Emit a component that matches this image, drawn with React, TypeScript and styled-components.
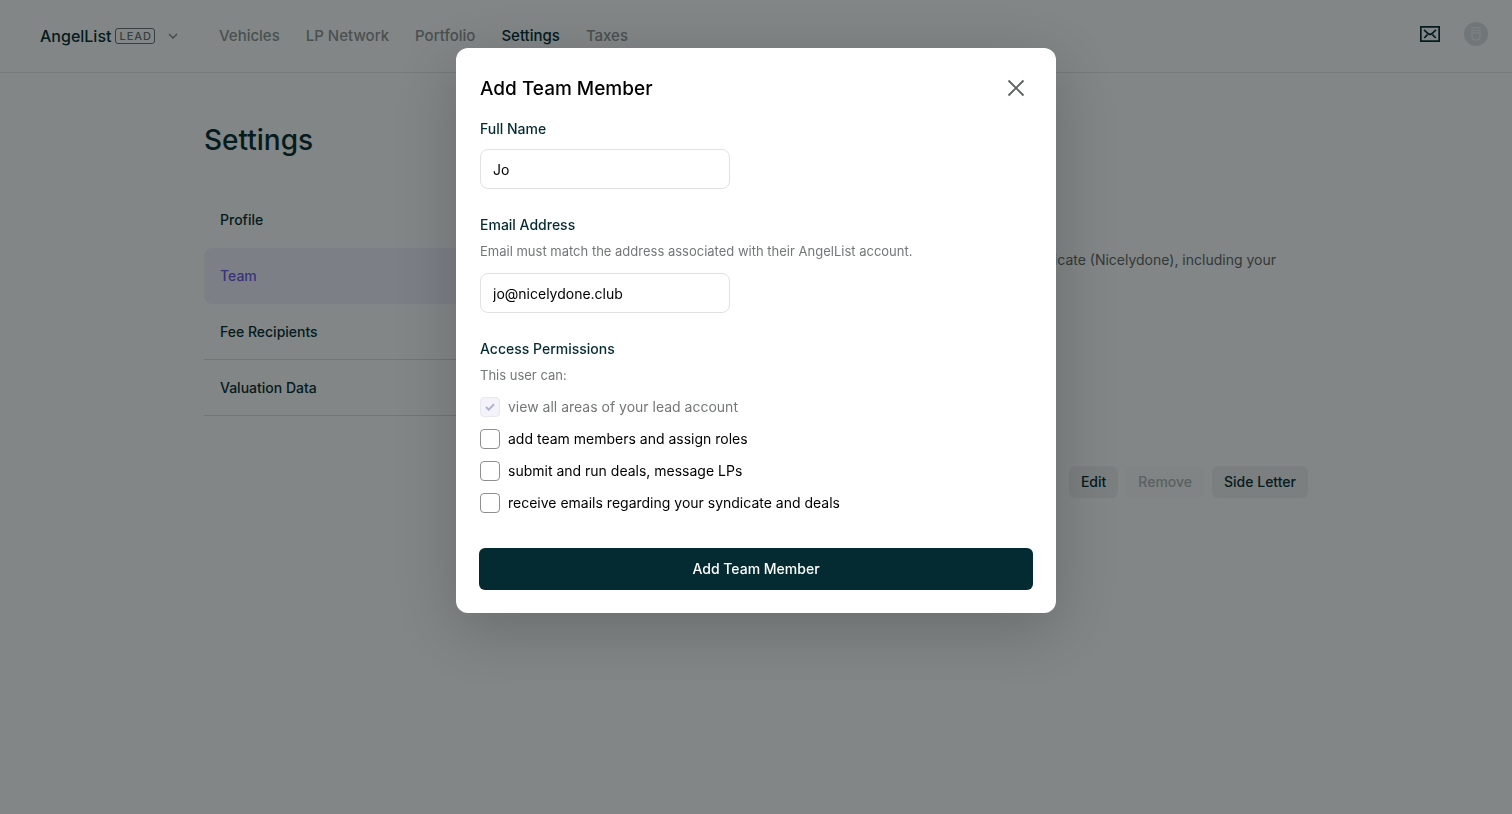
import React, { useState } from "react";
import styled, { createGlobalStyle } from "styled-components";

const ink = "#042b31";
const muted = "#737778";

const GlobalStyle = createGlobalStyle`
  *, *::before, *::after { box-sizing: border-box; }
  body { margin: 0; background: #fff; color: ${ink}; font-family: Inter, "Liberation Sans", sans-serif; font-size: 14px; line-height: 24px; }
  h1, h2, p, fieldset { margin: 0; padding: 0; border: 0; }
  button, input { font: inherit; color: inherit; }
  button { cursor: pointer; }
`;

const Page = styled.div`
  min-height: 100vh;
`;

const TopBar = styled.header`
  display: flex;
  align-items: center;
  height: 73px;
  padding: 0 24px 0 40px;
  border-bottom: 1px solid #e4e7e7;
`;

const Brand = styled.button`
  display: flex;
  align-items: center;
  width: 139px;
  padding: 0;
  border: 0;
  background: none;
  font-size: 16px;
  font-weight: 500;
`;

const LeadTag = styled.span`
  margin-left: 4px;
  padding: 0 2px 0 3px;
  border: 1px solid #6a7172;
  border-radius: 3px;
  color: #6a7172;
  font-size: 11px;
  line-height: 14px;
  letter-spacing: 1px;
`;

const Chevron = styled.svg`
  margin-left: auto;
`;

const Nav = styled.nav`
  display: flex;
  flex: 1;
  gap: 26px;
  margin-left: 40px;
`;

const NavLink = styled.a<{ $active?: boolean }>`
  color: ${(p) => (p.$active ? ink : "#8f9393")};
  font-size: 15px;
  font-weight: 500;
  text-decoration: none;
`;

const Tools = styled.div`
  display: flex;
  align-items: center;
  gap: 24px;
  padding-bottom: 4px;
`;

const IconButton = styled.button`
  display: flex;
  padding: 0;
  border: 0;
  background: none;
`;

const Content = styled.main`
  max-width: 1104px;
  margin: 0 auto;
  padding-top: 48px;
`;

const PageTitle = styled.h1`
  font-size: 28px;
  line-height: 38px;
  font-weight: 500;
`;

const Columns = styled.div`
  display: flex;
  gap: 32px;
  margin-top: 33px;
`;

const SideNav = styled.nav`
  flex: 0 0 268px;
`;

const SideLink = styled.a<{ $active?: boolean; $plain?: boolean }>`
  display: block;
  height: 56px;
  padding: 0 16px;
  border-bottom: 1px solid ${(p) => (p.$active || p.$plain ? "transparent" : "#dadedf")};
  border-radius: ${(p) => (p.$active ? "8px" : "0")};
  background: ${(p) => (p.$active ? "#f3f2ff" : "transparent")};
  color: ${(p) => (p.$active ? "#6a5ae6" : ink)};
  font-weight: 500;
  line-height: 56px;
  text-decoration: none;
`;

const TeamPanel = styled.section`
  flex: 1;
  padding-top: 56px;
`;

const Intro = styled.p`
  padding-right: 32px;
  color: #5f6566;
  text-align: right;
`;

const RowActions = styled.div`
  display: flex;
  justify-content: flex-end;
  gap: 8px;
  margin-top: 194px;
`;

const SmallButton = styled.button`
  height: 32px;
  padding: 0 12px;
  border: 0;
  border-radius: 6px;
  background: #f0f1f2;
  font-weight: 500;

  &:disabled {
    background: #fafafb;
    color: #b0b3b4;
  }
`;

const Overlay = styled.div`
  position: fixed;
  inset: 0;
  padding: 48px 16px;
  overflow: auto;
  background: rgba(6, 13, 13, 0.5);
`;

const Dialog = styled.form`
  max-width: 600px;
  margin: 0 auto;
  padding: 24px;
  border-radius: 12px;
  background: #fff;
  box-shadow: 0 16px 60px rgba(0, 0, 0, 0.2);
`;

const DialogHeader = styled.div`
  display: flex;
  align-items: center;
  justify-content: space-between;
  height: 32px;
  margin-bottom: 13px;
`;

const DialogTitle = styled.h2`
  color: #000;
  font-size: 19px;
  line-height: 25px;
  font-weight: 500;
`;

const CloseButton = styled.button`
  display: grid;
  place-items: center;
  width: 32px;
  height: 32px;
  padding: 0;
  border: 0;
  background: none;
  color: #5d6162;
`;

const Field = styled.div`
  margin-bottom: 24px;
`;

const Label = styled.label`
  display: block;
  font-weight: 500;
  font-size: 14px;
`;

const Legend = styled.legend`
  padding: 0;
  font-weight: 500;
  font-size: 14px;
`;

const Hint = styled.p`
  margin-top: 4px;
  margin-bottom: 12px;
  color: ${muted};
  font-size: 13px;
  line-height: 20px;
`;

const TextInput = styled.input`
  display: block;
  width: 250px;
  max-width: 100%;
  height: 40px;
  padding: 0 12px;
  border: 1px solid #dfe1e2;
  border-radius: 8px;
  background: #fff;
  color: #000;
  outline: 0;

  ${Label} + & {
    margin-top: 8px;
  }
`;

const Permissions = styled.div`
  display: grid;
  gap: 12px;
`;

const Permission = styled.label<{ $locked?: boolean }>`
  display: flex;
  align-items: center;
  gap: 8px;
  color: ${(p) => (p.$locked ? muted : "#000")};
  line-height: 20px;
`;

const CheckFrame = styled.span`
  display: grid;

  & > * {
    grid-area: 1 / 1;
    place-self: center;
  }
`;

const CheckBox = styled.input`
  width: 20px;
  height: 20px;
  margin: 0;
  appearance: none;
  border: 1px solid #8c9091;
  border-radius: 4px;
  background: #fff;

  &:disabled {
    border-color: #e8e8f2;
    background: #f3f3f9;
  }
`;

const SubmitButton = styled.button`
  width: 100%;
  height: 40px;
  margin-top: 36px;
  border: 0;
  border-radius: 5px;
  background: ${ink};
  box-shadow: 0 0 0 1px ${ink};
  color: #fff;
  font-weight: 500;
`;

const navItems = ["Vehicles", "LP Network", "Portfolio", "Settings", "Taxes"];
const sideItems = ["Profile", "Team", "Fee Recipients", "Valuation Data"];
const permissionItems = [
  "view all areas of your lead account",
  "add team members and assign roles",
  "submit and run deals, message LPs",
  "receive emails regarding your syndicate and deals",
];

export default function App() {
  const [name, setName] = useState("Jo");
  const [email, setEmail] = useState("jo@nicelydone.club");
  const [granted, setGranted] = useState([true, false, false, false]);
  const toggle = (index: number) =>
    setGranted(granted.map((value, i) => (i === index ? !value : value)));

  return (
    <Page>
      <GlobalStyle />
      <TopBar>
        <Brand type="button">
          AngelList<LeadTag>LEAD</LeadTag>
          <Chevron width="12" height="12" viewBox="0 0 12 12" fill="none" stroke="#7d8485" strokeWidth="1.3" aria-hidden="true">
            <path d="M2 4l4 4 4-4" />
          </Chevron>
        </Brand>
        <Nav>
          {navItems.map((item) => (
            <NavLink key={item} href="#" $active={item === "Settings"}>{item}</NavLink>
          ))}
        </Nav>
        <Tools>
          <IconButton type="button" aria-label="Messages">
            <svg width="20" height="16" viewBox="0 0 20 16" fill="none" stroke={ink} strokeWidth="1.7">
              <path d="M.85 .85h18.3v14.3H.85z" />
              <path d="M4 3.800l4.300 4q1.700 1.300 3.400 0l4.300-4M4.200 12l3.300-3.400M15.800 12l-3.300-3.400" />
            </svg>
          </IconButton>
          <IconButton type="button" aria-label="Account">
            <svg width="24" height="24" viewBox="0 0 24 24" fill="none" stroke="#f4f5f8" strokeWidth="1.2">
              <circle cx="12" cy="12" r="12" fill="#dcdee4" stroke="none" />
              <path d="M7.500 6h9M8 8.500h8v6.500c0 2-2 3-4 3s-4-1-4-3zM8 11h8" />
            </svg>
          </IconButton>
        </Tools>
      </TopBar>
      <Content>
        <PageTitle>Settings</PageTitle>
        <Columns>
          <SideNav>
            {sideItems.map((item) => (
              <SideLink key={item} href="#" $active={item === "Team"} $plain={item === "Profile"}>{item}</SideLink>
            ))}
          </SideNav>
          <TeamPanel>
            <Intro>syndicate (Nicelydone), including your</Intro>
            <RowActions>
              <SmallButton type="button">Edit</SmallButton>
              <SmallButton type="button" disabled>Remove</SmallButton>
              <SmallButton type="button">Side Letter</SmallButton>
            </RowActions>
          </TeamPanel>
        </Columns>
      </Content>
      <Overlay>
        <Dialog role="dialog" aria-modal="true" aria-labelledby="dialog-title" onSubmit={(e) => e.preventDefault()}>
          <DialogHeader>
            <DialogTitle id="dialog-title">Add Team Member</DialogTitle>
            <CloseButton type="button" aria-label="Close">
              <svg width="18" height="18" viewBox="0 0 18 18" fill="none" stroke="currentColor" strokeWidth="1.9">
                <path d="M1.500 1.500l15 15M16.500 1.500l-15 15" />
              </svg>
            </CloseButton>
          </DialogHeader>
          <Field>
            <Label htmlFor="full-name">Full Name</Label>
            <TextInput id="full-name" value={name} onChange={(e) => setName(e.target.value)} />
          </Field>
          <Field>
            <Label htmlFor="email">Email Address</Label>
            <Hint id="email-hint">Email must match the address associated with their AngelList account.</Hint>
            <TextInput id="email" type="email" aria-describedby="email-hint" value={email} onChange={(e) => setEmail(e.target.value)} />
          </Field>
          <fieldset>
            <Legend>Access Permissions</Legend>
            <Hint>This user can:</Hint>
            <Permissions>
              {permissionItems.map((item, index) => (
                <Permission key={item} $locked={index === 0}>
                  <CheckFrame>
                    <CheckBox type="checkbox" checked={granted[index]} disabled={index === 0} onChange={() => toggle(index)} />
                    {granted[index] && (
                      <svg width="10" height="8" viewBox="0 0 10 8" fill="none" stroke="#b0b5d0" strokeWidth="2" aria-hidden="true">
                        <path d="M1 4l2.700 2.700L9 1.300" />
                      </svg>
                    )}
                  </CheckFrame>
                  {item}
                </Permission>
              ))}
            </Permissions>
          </fieldset>
          <SubmitButton type="submit">Add Team Member</SubmitButton>
        </Dialog>
      </Overlay>
    </Page>
  );
}
